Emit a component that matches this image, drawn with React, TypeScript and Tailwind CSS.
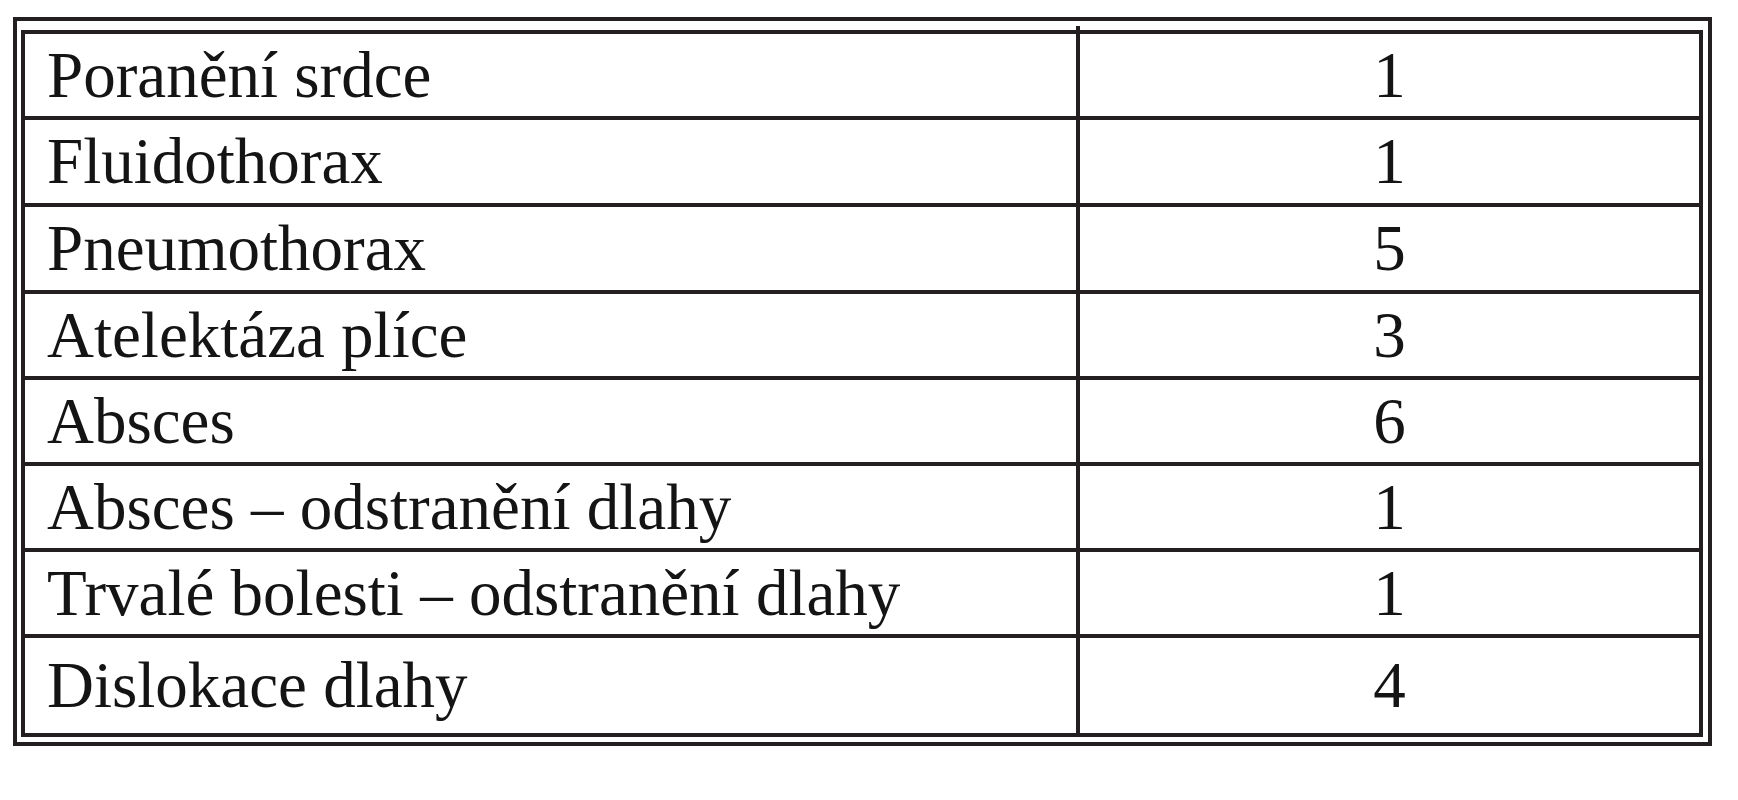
const rows: { label: string; count: number; h: string }[] = [
  { label: 'Poranění srdce', count: 1, h: 'h-[82px]' },
  { label: 'Fluidothorax', count: 1, h: 'h-[87px]' },
  { label: 'Pneumothorax', count: 5, h: 'h-[87px]' },
  { label: 'Atelektáza plíce', count: 3, h: 'h-[86px]' },
  { label: 'Absces', count: 6, h: 'h-[86px]' },
  { label: 'Absces – odstranění dlahy', count: 1, h: 'h-[86px]' },
  { label: 'Trvalé bolesti – odstranění dlahy', count: 1, h: 'h-[86px]' },
  { label: 'Dislokace dlahy', count: 4, h: 'h-[99px]' },
];

export default function App() {
  return (
    <div className="w-[1738px] h-[800px] bg-white pt-[17px] pl-[13px] font-['Liberation_Serif',serif] text-[#141414]">
      <div className="relative w-[1699px] border-4 border-[#231f20] pt-[9px] pl-[4px] pr-[5px] pb-[5px]">
        {/* stub of the column rule poking above the inner frame */}
        <div className="absolute left-[1059px] top-[5px] w-[4px] h-[4px] bg-[#231f20]" />
        <div className="border-4 border-[#231f20]">
          {rows.map((row, i) => (
            <div
              key={i}
              className={`flex ${row.h} ${i > 0 ? 'border-t-4 border-[#231f20]' : ''}`}
            >
              <div className="w-[1051px] flex items-center pl-[22px] text-[65px] leading-none">
                {row.label}
              </div>
              <div className="flex-1 flex items-center justify-center border-l-4 border-[#231f20] text-[65px] leading-none">
                {row.count}
              </div>
            </div>
          ))}
        </div>
      </div>
    </div>
  );
}
